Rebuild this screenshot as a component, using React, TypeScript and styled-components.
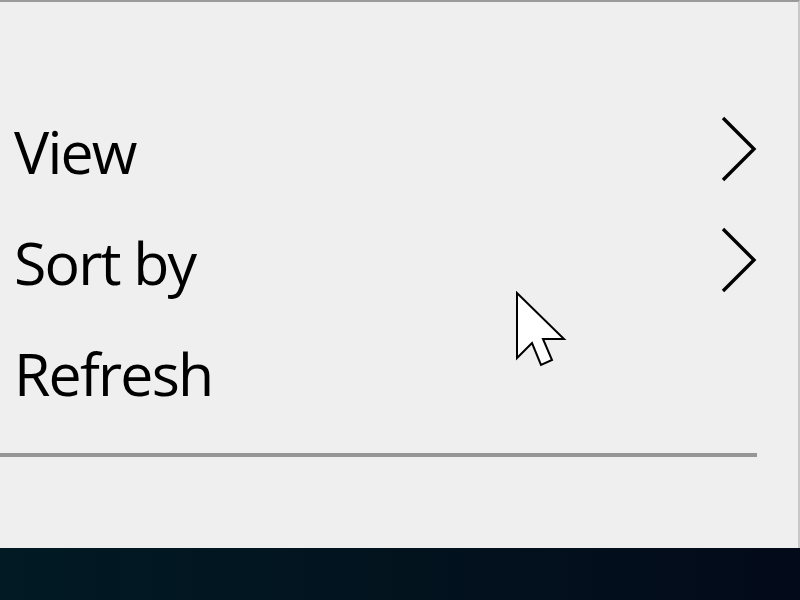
import React from "react"
import styled, { createGlobalStyle } from "styled-components"

const GlobalStyle = createGlobalStyle`
  html, body {
    margin: 0;
    padding: 0;
    width: 800px;
    height: 600px;
    overflow: hidden;
  }
  body {
    font-family: "Open Sans", "Noto Sans", sans-serif;
  }
`

const items = [
  { label: "View", submenu: true },
  { label: "Sort by", submenu: true },
  { label: "Refresh", submenu: false },
]

const Chevron = () => (
  <Arrow width="36" height="66" viewBox="0 0 36 66">
    <path d="M2 2 L33 33 L2 64" fill="none" stroke="#000" strokeWidth="3.4" />
  </Arrow>
)

const Cursor = () => (
  <svg width="52" height="78" viewBox="0 0 52 78">
    <path
      d="M2 2 L2 67 L17 52 L26 74 L37 69 L28 48 L49 48 Z"
      fill="#fff"
      stroke="#000"
      strokeWidth="2"
      strokeLinejoin="miter"
    />
  </svg>
)

const App = () => {
  return (
    <>
      <GlobalStyle />
      <Screen>
        <Menu>
          <List>
            {items.map((item) => (
              <Row key={item.label}>
                <Label>{item.label}</Label>
                {item.submenu && <Chevron />}
              </Row>
            ))}
          </List>
          <Separator />
          <CursorWrap>
            <Cursor />
          </CursorWrap>
        </Menu>
        <Desktop />
      </Screen>
    </>
  )
}

export default App

const Screen = styled.div`
  width: 800px;
  height: 600px;
  display: flex;
  flex-direction: column;
`

const Menu = styled.div`
  position: relative;
  height: 548px;
  box-sizing: border-box;
  background: #efefef;
  border-top: 2px solid #9a9a9a;
  border-right: 2px solid #c8c8c8;
  padding-top: 94px;
`

const List = styled.div`
  display: flex;
  flex-direction: column;
`

const Row = styled.div`
  height: 111px;
  display: flex;
  align-items: center;
  justify-content: space-between;
  padding: 0 41px 0 14px;
`

const Label = styled.span`
  font-size: 59px;
  line-height: 1;
  color: #000;
  letter-spacing: -1.8px;
`

const Arrow = styled.svg`
  margin-bottom: 6px;
`

const Separator = styled.div`
  margin-top: 24px;
  width: 757px;
  height: 4px;
  background: #969696;
`

const CursorWrap = styled.div`
  position: absolute;
  left: 515px;
  top: 289px;
  line-height: 0;
`

const Desktop = styled.div`
  flex: 1;
  background: linear-gradient(90deg, #011a24 0%, #02131e 50%, #030a1a 100%);
`
